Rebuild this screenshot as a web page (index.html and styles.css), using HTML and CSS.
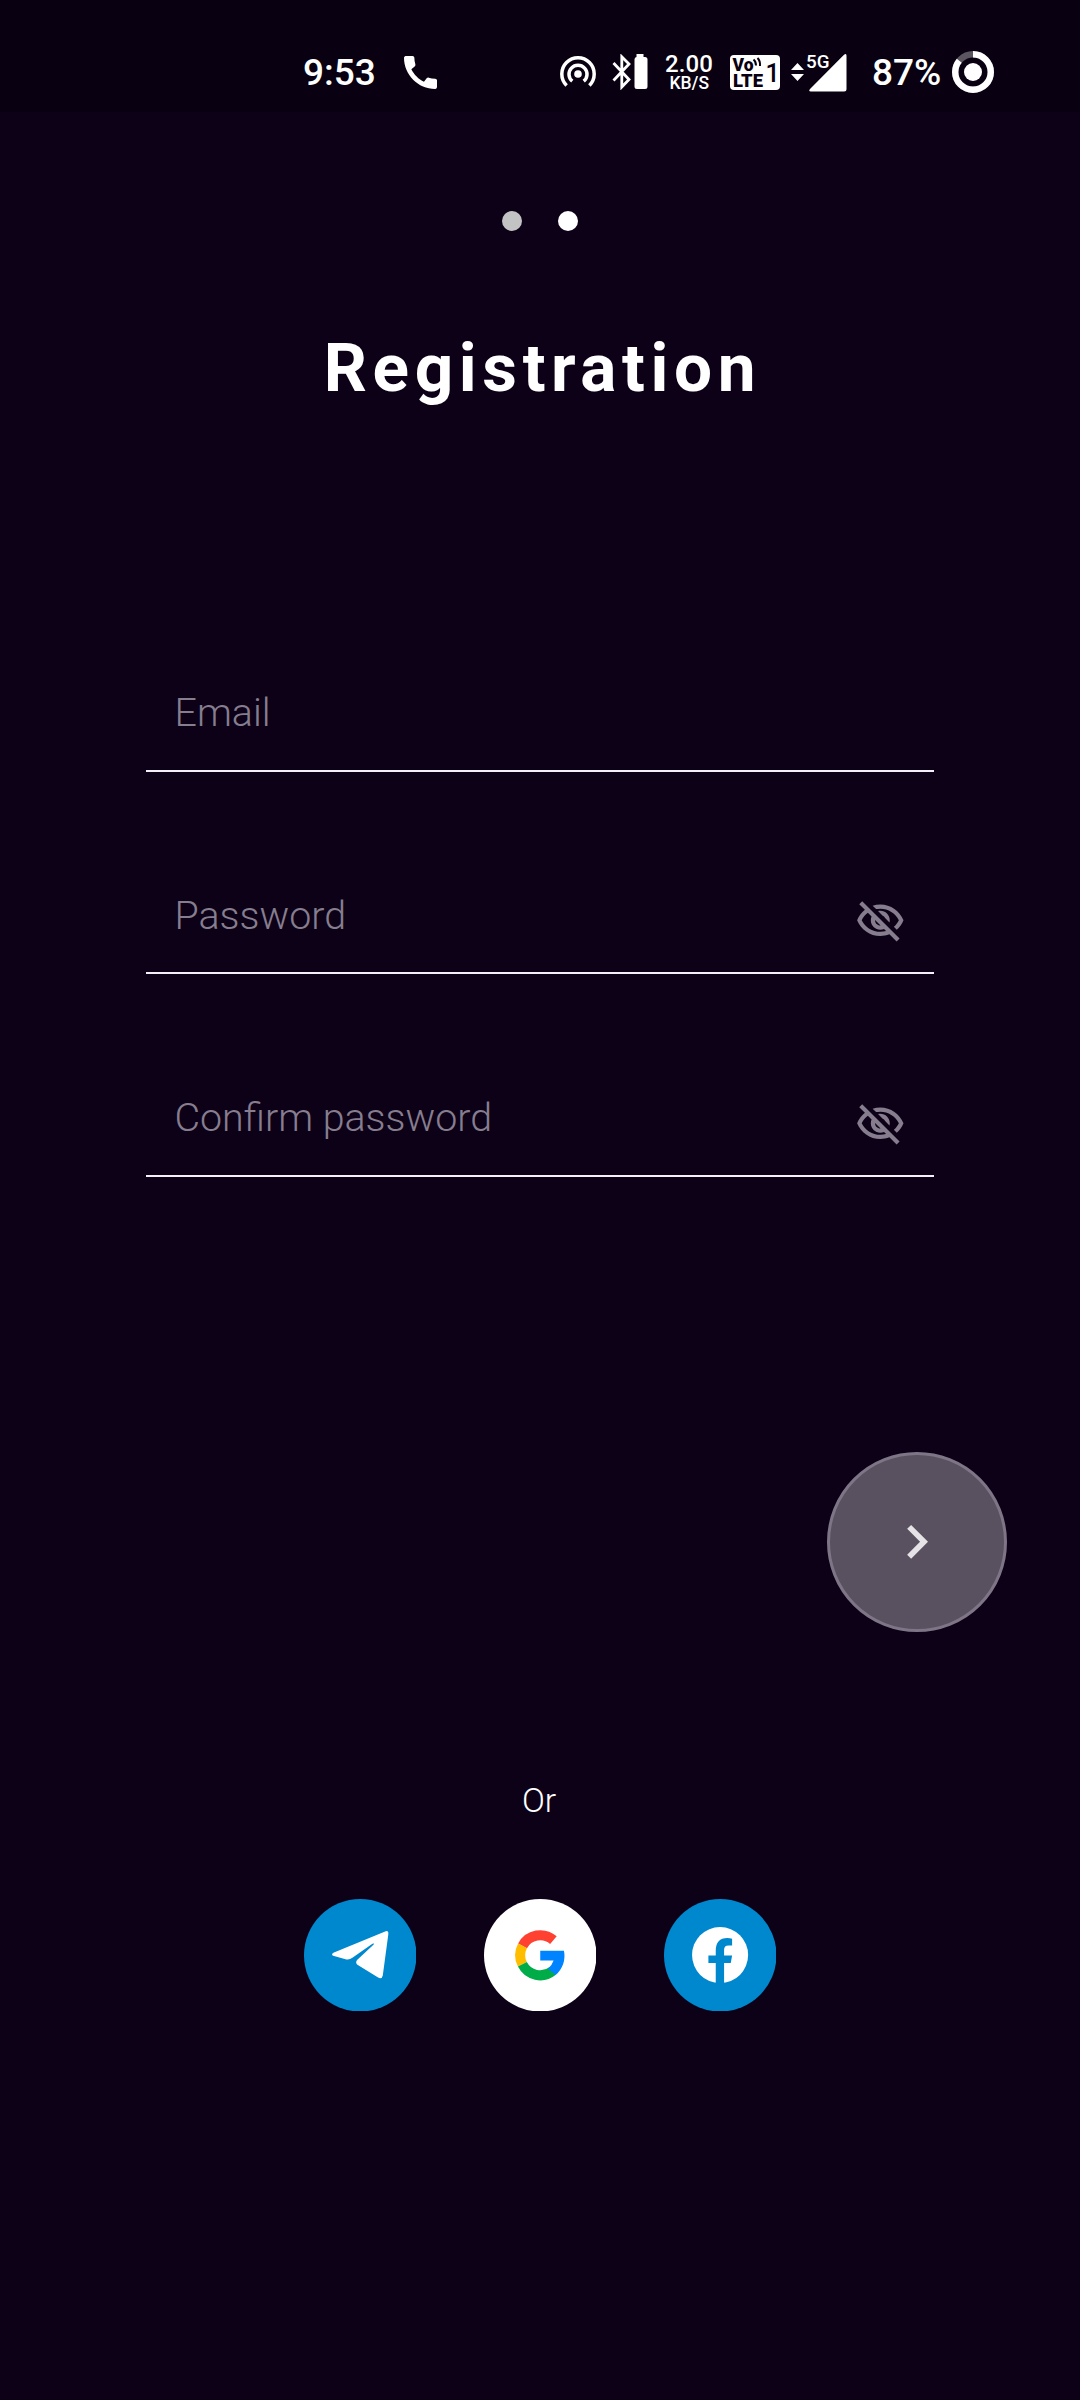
FILE: index.html
```html
<!DOCTYPE html>
<html lang="en">
<head>
<meta charset="utf-8">
<title>Registration</title>
<link rel="stylesheet" href="styles.css">
</head>
<body>
<header class="status">
  <span class="clock">9:53</span>
  <svg class="call" viewBox="3 3 18 18"><path d="M20.01 15.38c-1.23 0-2.42-.2-3.53-.56-.35-.12-.74-.03-1.01.24l-1.57 1.97c-2.83-1.35-5.48-3.9-6.89-6.83l1.95-1.66c.27-.28.35-.67.24-1.02-.37-1.11-.56-2.3-.56-3.53 0-.54-.45-.99-.99-.99H4.19C3.65 3 3 3.24 3 3.99 3 13.28 10.73 21 20.01 21c.71 0 .99-.63.99-1.18v-3.45c0-.54-.45-.99-.99-.99z"/></svg>
  <svg class="hotspot" viewBox="0 0 36 36"><circle cx="18" cy="18" r="3.8"/><g class="line"><path d="M12.3 25.2A9 9 0 1 1 23.7 25.2"/><path d="M6.6 29.5A16.2 16.2 0 1 1 29.4 29.5"/></g></svg>
  <svg class="bluetooth" viewBox="0 0 36 36"><path class="line" d="M1.5 9L17 25.5 9.8 33V2.800L17 10 1.500 26.500"/><path d="M24.500 0h7v3h1.500q2.500 0 2.500 2.500v27q0 2.500-2.500 2.500h-8q-2.500 0-2.500-2.500v-27q0-2.500 2-2.500z"/></svg>
  <svg class="speed" viewBox="0 0 50 36"><text x="1" y="18.300" font-size="24" textLength="48">2.00</text><text x="5.500" y="34.700" font-size="18.500" textLength="39.500" lengthAdjust="spacingAndGlyphs">KB/S</text></svg>
  <svg class="volte" viewBox="0 0 50 35"><rect width="50" height="35" rx="4"/><g class="ink"><text x="2.500" y="16" font-size="18.500" textLength="21" lengthAdjust="spacingAndGlyphs">Vo</text><text x="3" y="31.500" font-size="18" textLength="30" lengthAdjust="spacingAndGlyphs">LTE</text><text class="sim" x="35.500" y="26.500" font-size="25" textLength="12">1</text></g><path class="wave" d="M23.500 4.500q2.500 2 2.500 6M27.500 3q3 3 2.500 8"/></svg>
  <svg class="signal" viewBox="0 0 56 38"><path d="M0 16l6.500-7 6.500 7zM0 20h13l-6.500 7zM53 .8q2.500-2 2.500 1V35q0 2.500-2.500 2.500H20q-3 0-1-2.500z"/><text x="15" y="14" font-size="18.500" textLength="23.500" lengthAdjust="spacingAndGlyphs">5G</text></svg>
  <span class="percent">87%</span>
  <svg class="battery" viewBox="0 0 42 42"><circle class="track" cx="21" cy="21" r="17.800"/><circle class="charge" cx="21" cy="21" r="17.800" pathLength="100"/><circle cx="21" cy="21" r="9"/></svg>
</header>
<main>
  <div class="dots"><i class="dot"></i><i class="dot active"></i></div>
  <h1>Registration</h1>
  <form>
    <label class="field"><input type="email" placeholder="Email"></label>
    <label class="field"><input type="password" placeholder="Password"><svg class="eye" viewBox="0 0 24 24"><use href="#eye-off"/></svg></label>
    <label class="field"><input type="password" placeholder="Confirm password"><svg class="eye" viewBox="0 0 24 24"><path id="eye-off" d="M12 6c3.790 0 7.170 2.130 8.820 5.500-.59 1.220-1.420 2.270-2.410 3.120l1.410 1.410c1.390-1.230 2.490-2.770 3.180-4.530C21.270 7.110 17 4 12 4c-1.270 0-2.490.2-3.640.57l1.650 1.650C10.660 6.090 11.320 6 12 6zm-1.070 1.140L13 9.210c.57.25 1.030.71 1.280 1.280l2.070 2.070c.08-.34.14-.7.14-1.070C16.500 9.010 14.480 7 12 7c-.37 0-.72.05-1.070.14zM2.010 3.870l2.680 2.680C3.060 7.830 1.770 9.530 1 11.500 2.730 15.890 7 19 12 19c1.520 0 2.980-.29 4.320-.82l3.420 3.420 1.410-1.410L3.420 2.450 2.010 3.870zm7.500 7.500l2.610 2.610c-.04.01-.08.02-.12.02-1.380 0-2.500-1.120-2.500-2.500 0-.05.01-.08.01-.13zm-3.400-3.400l1.750 1.750c-.23.55-.36 1.150-.36 1.780 0 2.480 2.020 4.500 4.500 4.500.63 0 1.230-.13 1.770-.36l.98.98c-.88.24-1.800.38-2.750.38-3.790 0-7.170-2.130-8.820-5.500.7-1.430 1.720-2.610 2.930-3.530z"/></svg></label>
    <button class="next" type="button" aria-label="Next"><svg viewBox="0 0 24 24"><path d="M10 6L8.590 7.410 13.170 12l-4.580 4.590L10 18l6-6z"/></svg></button>
  </form>
  <p class="or">Or</p>
  <div class="social">
    <svg viewBox="0 0 337 337" role="img" aria-label="Telegram"><circle class="blue" cx="168.500" cy="168.500" r="168.500"/><path d="M88 161L243 97Q254 93 252.500 106L236 229Q233 242 222 235L160 197Q153 191 159 183L208 137Q213 131 205 134L145 176Q136 183 127 181L90 171Q79 167 88 161Z"/></svg>
    <svg viewBox="0 0 337 337" role="img" aria-label="Google"><circle cx="168.500" cy="168.500" r="168.500"/><g class="google"><path stroke="#ff4131" d="M207.900 123.200A60 60 0 0 0 115.500 140.300"/><path stroke="#ffbd00" d="M115.500 140.300A60 60 0 0 0 115 195.700"/><path stroke="#00ac47" d="M115 195.700A60 60 0 0 0 206 215.500"/></g><path fill="#0083ff" d="M168.500 155H239.500A75 75 0 0 1 214.700 227.600L191.500 209Q203 200 208.500 184H168.500Z"/></svg>
    <svg viewBox="0 0 337 337" role="img" aria-label="Facebook"><circle class="blue" cx="168.500" cy="168.500" r="168.500"/><circle cx="168" cy="168" r="84"/><path class="blue" d="M155 254V192H133V169H155V155Q155 117 190 117Q198 117 204 119V139H193Q180 139 180 152V169H204L200 192H180V254Z"/></svg>
  </div>
</main>
</body>
</html>
```
FILE: styles.css
```css
* { box-sizing: border-box; }
body {
  margin: 0;
  width: 1080px;
  height: 2400px;
  background: #0d0118;
  color: #fff;
  font-family: Roboto, sans-serif;
}
svg { display: block; flex: none; fill: #fff; }
.line { fill: none; stroke: #fff; stroke-width: 3.5; }

.status {
  display: flex;
  align-items: flex-start;
  height: 112px;
  padding: 54px 0 0 303px;
  background: #090011;
}
.clock, .percent {
  font-size: 37px;
  font-weight: 500;
  line-height: 38px;
  white-space: nowrap;
}
.clock { width: 101px; }
.call { width: 33px; height: 33px; margin-top: 2px; }
.hotspot { width: 36px; height: 36px; margin: 2px 0 0 123px; }
.bluetooth { width: 36px; height: 36px; margin-left: 16px; }
.bluetooth .line { stroke-width: 2.8; }
.speed { width: 50px; height: 36px; margin-left: 16px; font-weight: 500; }
.volte { width: 50px; height: 35px; margin: 1px 0 0 16px; }
.ink { fill: #090011; font-weight: 900; }
.sim { font-weight: 500; }
.wave { fill: none; stroke: #090011; stroke-width: 2; }
.signal { width: 56px; height: 38px; margin-left: 11px; font-weight: 500; }
.percent { width: 80px; margin-left: 25px; }
.battery { width: 42px; height: 42px; margin-top: -3px; }
.track, .charge { fill: none; stroke: #5b5560; stroke-width: 6.4; }
.charge { stroke: #fff; stroke-dasharray: 86 14; transform: rotate(-90deg); transform-origin: center; }

.dots { display: flex; justify-content: center; gap: 36px; padding-top: 99px; }
.dot { width: 20px; height: 20px; border-radius: 50%; background: #c4c3c4; }
.dot.active { background: #fff; }
h1 {
  margin: 97px 0 0;
  padding-left: 5px;
  font-size: 67.5px;
  line-height: 80px;
  font-weight: 700;
  letter-spacing: 5.625px;
  text-align: center;
}
form { display: flex; flex-direction: column; margin: 161.4px 73px 0 146px; }
.field {
  display: flex;
  align-items: center;
  width: 788px;
  height: 202.5px;
  padding: 99px 28px 0;
  border-bottom: 2px solid #f4eff8;
}
input {
  flex: 1;
  min-width: 0;
  height: 100px;
  padding: 0 0 13px .5px;
  border: 0;
  outline: 0;
  background: none;
  color: #fff;
  font: 300 39.375px Roboto, sans-serif;
}
input::placeholder { color: #867e8e; opacity: 1; }
.eye { width: 50.6px; height: 50.6px; fill: #867e8e; }
.next {
  display: flex;
  align-items: center;
  justify-content: center;
  align-self: flex-end;
  width: 180px;
  height: 180px;
  margin-top: 275px;
  padding: 0;
  border: 3px solid #7e7687;
  border-radius: 50%;
  background: #59515f;
}
.next svg { width: 67.5px; height: 67.5px; fill: #e5e3e6; }
.or {
  margin: 149px 0 0;
  padding-right: 2px;
  font-size: 33.75px;
  line-height: 40px;
  font-weight: 300;
  text-align: center;
}
.social { display: flex; justify-content: center; gap: 67.5px; margin-top: 78px; }
.social svg { width: 112.5px; height: 112.5px; }
.social .blue { fill: #0088ce; }
.google { fill: none; stroke-width: 30; }
```
